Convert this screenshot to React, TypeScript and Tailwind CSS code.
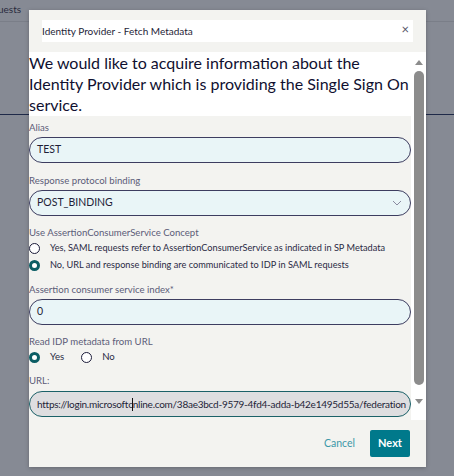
import React from "react";

const font = { fontFamily: "Lato, 'Noto Sans', sans-serif" };

function Label({ children, className = "" }: { children: React.ReactNode; className?: string }) {
  return (
    <div className={`h-[12px] text-[9.6px] leading-[12px] text-[#5c5c78] whitespace-nowrap ${className}`}>{children}</div>
  );
}

function Radio({ checked }: { checked?: boolean }) {
  return checked ? (
    <span className="inline-block w-[11px] h-[11px] rounded-full border-[3px] border-[#0b5d64] bg-white shrink-0" />
  ) : (
    <span className="inline-block w-[11px] h-[11px] rounded-full border-[1.5px] border-[#1c1c3a] bg-white shrink-0" />
  );
}

export default function App() {
  return (
    <div className="relative w-[454px] h-[476px] bg-[#868a94] overflow-hidden" style={font}>
      <div className="h-[22px] border-b border-[#7a7e88] text-[10px] leading-[18px] text-[#2a2a3e] overflow-hidden">
        <span className="block -ml-[2px]">uests</span>
      </div>
      <div className="absolute left-0 right-0 top-[114px] h-px bg-[#1e2948]" />
      <div className="absolute left-[29px] top-[10px] w-[397px] h-[457px] bg-[#f3f3f0] shadow-[0_1px_4px_rgba(0,0,0,0.25)] flex flex-col">
        <div className="mx-[13px] mt-[10px] h-[22px] bg-white flex items-center justify-between">
          <span className="text-[10px] text-[#1e1e38] whitespace-nowrap">Identity Provider - Fetch Metadata</span>
          <span className="text-[13px] leading-none text-[#55556a] mr-[4px] -mt-[4px]">×</span>
        </div>
        <div className="mt-[10px] flex h-[368px]">
          <div className="w-[382px] flex flex-col">
            <div className="bg-white h-[64px] text-[16px] leading-[21px] text-[#101030] whitespace-nowrap">
              <div>We would like to acquire information about the</div>
              <div>Identity Provider which is providing the Single Sign On</div>
              <div>service.</div>
            </div>
            <Label className="mt-[6px]">Alias</Label>
            <div className="mt-[3px] h-[26px] rounded-full border border-[#3d3d60] bg-[#e9f5f7] flex items-center px-[7px] text-[10.5px] text-[#1e1e38]">TEST</div>
            <Label className="mt-[12px]">Response protocol binding</Label>
            <div className="mt-[3px] h-[26px] rounded-full border border-[#3d3d60] bg-[#e9f5f7] flex items-center justify-between px-[7px] text-[10.5px] text-[#1e1e38]">
              <span>POST_BINDING</span>
              <svg width="10" height="6" viewBox="0 0 10 6" className="mr-[1px]">
                <path d="M1 1l4 4 4-4" fill="none" stroke="#8a8aa0" strokeWidth="1" />
              </svg>
            </div>
            <Label className="mt-[11px]">Use AssertionConsumerService Concept</Label>
            <div className="mt-[2px] h-[14px] flex items-center text-[9.2px] text-[#2a2a44] whitespace-nowrap">
              <Radio />
              <span className="ml-[10px]">Yes, SAML requests refer to AssertionConsumerService as indicated in SP Metadata</span>
            </div>
            <div className="mt-[3px] h-[14px] flex items-center text-[9.2px] text-[#2a2a44] whitespace-nowrap">
              <Radio checked />
              <span className="ml-[10px]">No, URL and response binding are communicated to IDP in SAML requests</span>
            </div>
            <Label className="mt-[12px]">Assertion consumer service index*</Label>
            <div className="mt-[3px] h-[26px] rounded-full border border-[#3d3d60] bg-[#e9f5f7] flex items-center px-[7px] text-[10.5px] text-[#1e1e38]">0</div>
            <Label className="mt-[11px]">Read IDP metadata from URL</Label>
            <div className="mt-[2px] h-[14px] flex items-center text-[9.6px] text-[#2a2a44] whitespace-nowrap">
              <Radio checked />
              <span className="ml-[10px]">Yes</span>
              <span className="ml-[17px] flex"><Radio /></span>
              <span className="ml-[10px]">No</span>
            </div>
            <Label className="mt-[11px]">URL:</Label>
            <div className="mt-[4px] h-[26px] rounded-full border border-[#1b6168] bg-[#dedee0] flex items-center pl-[7px] pr-[4px] text-[10px] tracking-[-0.25px] text-[#1e1e38] overflow-hidden whitespace-nowrap">
              <span className="overflow-hidden">https://login.microsoftc<span className="inline-block w-px h-[13px] bg-[#111] align-middle -mx-[0.5px]" />nline.com/38ae3bcd-9579-4fd4-adda-b42e1495d55a/federationmetadata</span>
            </div>
          </div>
          <div className="w-[15px] bg-white flex flex-col items-center">
            <svg width="10" height="8" viewBox="0 0 10 8" className="mt-[6px]">
              <path d="M1 7L5 2L9 7Z" fill="#8c8c8c" />
            </svg>
            <div className="mt-[5px] w-[10px] h-[314px] rounded-full bg-[#8c8c8c]" />
            <svg width="10" height="8" viewBox="0 0 10 8" className="mt-[13px]">
              <path d="M1 1L5 6L9 1Z" fill="#8c8c8c" />
            </svg>
          </div>
        </div>
        <div className="mt-[10px] flex items-center justify-end pr-[16px]">
          <span className="text-[10.5px] text-[#3c98a8] mr-[15px]">Cancel</span>
          <button className="w-[40px] h-[27px] rounded-[2px] bg-[#00798b] text-white text-[11px] font-bold">Next</button>
        </div>
      </div>
    </div>
  );
}
